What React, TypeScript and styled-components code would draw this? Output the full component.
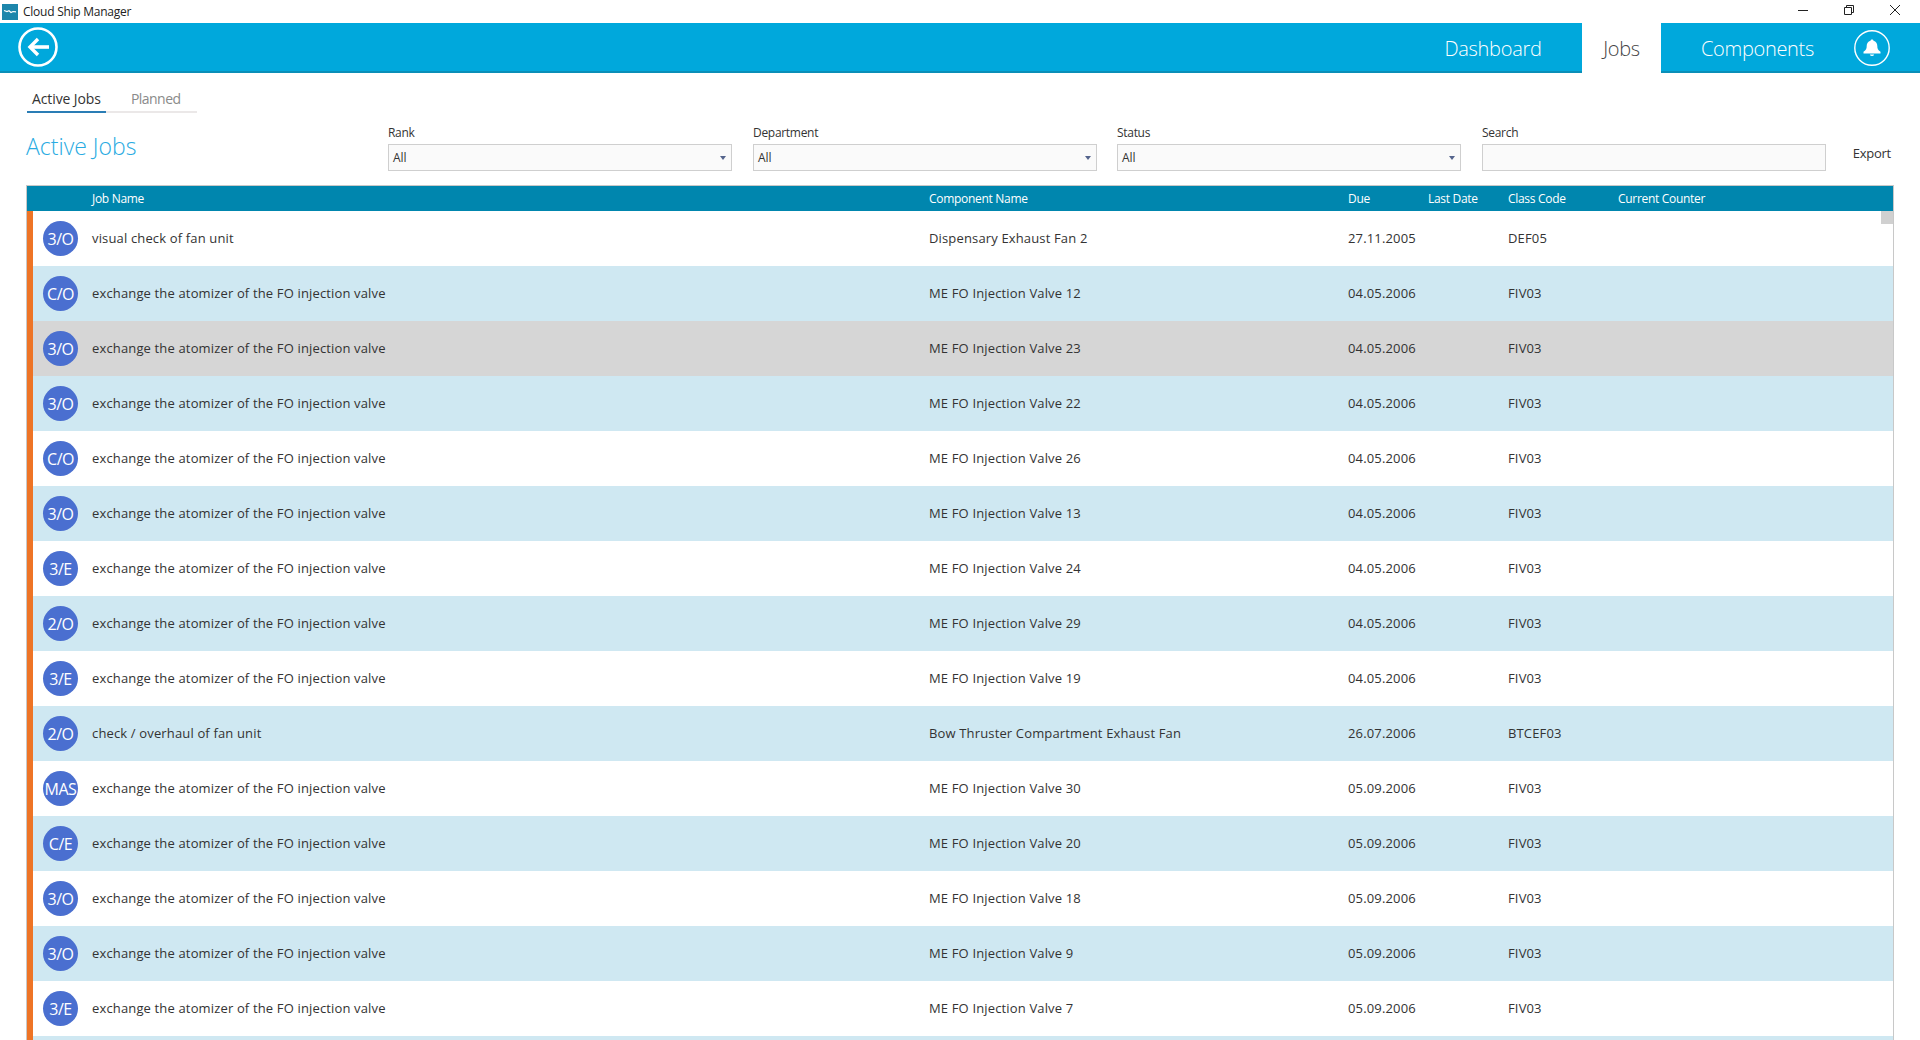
import React from "react";
import styled, { createGlobalStyle } from "styled-components";

const FONT = `"Open Sans", "Noto Sans", "Liberation Sans", sans-serif`;

const Global = createGlobalStyle`
  html, body { margin: 0; padding: 0; background: #fff; overflow: hidden; }
  body { font-family: ${FONT}; color: #333; }
  * { box-sizing: border-box; }
`;

const Page = styled.div`
  width: 1920px;
  height: 1040px;
  overflow: hidden;
  display: flex;
  flex-direction: column;
`;

const TitleBar = styled.div`
  height: 23px;
  flex: none;
  display: flex;
  align-items: center;
  padding: 0 2px;
  font-size: 12px;
  letter-spacing: -0.25px;
  color: #222;
`;

const AppName = styled.span`
  margin-left: 5px;
  flex: 1;
`;

const WinButton = styled.div`
  width: 46px;
  height: 20px;
  margin-top: -3px;
  display: flex;
  align-items: center;
  justify-content: center;
`;

const AppBar = styled.header`
  height: 50px;
  flex: none;
  display: flex;
  align-items: flex-start;
  background: #00a8dc;
  border-bottom: 2px solid #0a8fb8;
  padding-left: 18px;
`;

const BackButton = styled.div`
  width: 40px;
  height: 40px;
  margin-top: 4px;
  flex: none;
`;

const NavSpacer = styled.div`
  flex: 1;
`;

const NavItem = styled.div<{ $active?: boolean; $width: number }>`
  width: ${(p) => p.$width}px;
  height: ${(p) => (p.$active ? 50 : 48)}px;
  display: flex;
  justify-content: center;
  align-items: center;
  font-size: 20px;
  font-weight: 300;
  letter-spacing: -0.3px;
  padding-top: ${(p) => (p.$active ? 0 : 2)}px;
  color: ${(p) => (p.$active ? "#444" : "#fff")};
  background: ${(p) => (p.$active ? "#fff" : "transparent")};
  flex: none;
`;

const BellSlot = styled.div`
  width: 66px;
  flex: none;
  padding-top: 7px;
`;

const Content = styled.main`
  flex: 1;
  min-height: 0;
  display: flex;
  flex-direction: column;
  padding: 0 26px;
`;

const Tabs = styled.div`
  display: flex;
  width: 170px;
  height: 40px;
  flex: none;
  margin-left: 1px;
  border-bottom: 2px solid #ebe8e8;
`;

const Tab = styled.div<{ $active?: boolean; $width: number }>`
  width: ${(p) => p.$width}px;
  height: 40px;
  flex: none;
  padding: 16px 0 0 ${(p) => (p.$active ? 5 : 25)}px;
  font-size: 14px;
  letter-spacing: ${(p) => (p.$active ? "-0.1px" : "-0.55px")};
  line-height: 20px;
  color: ${(p) => (p.$active ? "#333" : "#8a8a8a")};
  border-bottom: 2px solid ${(p) => (p.$active ? "#2a7db5" : "transparent")};
`;

const FilterRow = styled.div`
  display: grid;
  grid-template-columns: 362px 365px 364px 365px 344px 1fr;
  height: 72px;
  flex: none;
`;

const PageTitle = styled.h1`
  margin: 17px 0 0;
  font-size: 23px;
  line-height: 32px;
  font-weight: 300;
  letter-spacing: 0;
  color: #29abe2;
`;

const Field = styled.div`
  padding-top: 11px;
  width: 344px;
`;

const FieldLabel = styled.div`
  font-size: 12px;
  line-height: 16px;
  letter-spacing: -0.3px;
  color: #333;
  margin-bottom: 4px;
  padding-top: 1px;
  height: 16px;
`;

const Select = styled.div`
  height: 27px;
  border: 1px solid #cfcfcf;
  background: #fafafa;
  display: flex;
  align-items: center;
  justify-content: space-between;
  padding: 0 5px 0 4px;
  font-size: 12px;
  color: #333;
`;

const Caret = styled.span`
  width: 0;
  height: 0;
  border-left: 3px solid transparent;
  border-right: 3px solid transparent;
  border-top: 4px solid #54648c;
`;

const Export = styled.div`
  font-size: 13px;
  letter-spacing: -0.25px;
  line-height: 18px;
  padding: 31px 3px 0 0;
  color: #333;
  text-align: right;
`;

const TableFrame = styled.section`
  flex: 1;
  min-height: 0;
  position: relative;
  border-left: 1px solid #c8c8c8;
  border-right: 1px solid #c8c8c8;
  border-top: 1px solid #c8c8c8;
  overflow: hidden;
`;

const HeaderRow = styled.div`
  display: grid;
  grid-template-columns: 65px 837px 419px 80px 80px 110px 1fr;
  height: 25px;
  align-items: center;
  background: #0086ae;
  color: #fff;
  font-size: 12px;
  letter-spacing: -0.3px;
`;

const Rows = styled.div`
  border-left: 6px solid #ee7426;
`;

const Row = styled.div<{ $tone: "white" | "blue" | "grey" }>`
  display: grid;
  grid-template-columns: 59px 837px 419px 80px 80px 110px 1fr;
  height: 55px;
  align-items: center;
  font-size: 13px;
  letter-spacing: 0.15px;
  color: #333;
  background: ${(p) =>
    p.$tone === "grey" ? "#d6d6d6" : p.$tone === "blue" ? "#cfe8f2" : "#fff"};
`;

const Avatar = styled.div`
  width: 35px;
  height: 35px;
  margin-left: 10px;
  border-radius: 50%;
  background: #4a6fd0;
  color: #fff;
  font-size: 16px;
  letter-spacing: -0.5px;
  display: flex;
  align-items: center;
  justify-content: center;
  white-space: nowrap;
`;

const ScrollThumb = styled.div`
  position: absolute;
  top: 25px;
  right: 0;
  width: 12px;
  height: 13px;
  background: #d0d0d0;
`;

const Cell = styled.div`
  white-space: nowrap;
  padding-bottom: 1px;
`;

type Job = [string, string, string, string, string];
const A = "exchange the atomizer of the FO injection valve";
const jobs: Job[] = [
  ["3/O", "visual check of fan unit", "Dispensary Exhaust Fan 2", "27.11.2005", "DEF05"],
  ["C/O", A, "ME FO Injection Valve 12", "04.05.2006", "FIV03"],
  ["3/O", A, "ME FO Injection Valve 23", "04.05.2006", "FIV03"],
  ["3/O", A, "ME FO Injection Valve 22", "04.05.2006", "FIV03"],
  ["C/O", A, "ME FO Injection Valve 26", "04.05.2006", "FIV03"],
  ["3/O", A, "ME FO Injection Valve 13", "04.05.2006", "FIV03"],
  ["3/E", A, "ME FO Injection Valve 24", "04.05.2006", "FIV03"],
  ["2/O", A, "ME FO Injection Valve 29", "04.05.2006", "FIV03"],
  ["3/E", A, "ME FO Injection Valve 19", "04.05.2006", "FIV03"],
  ["2/O", "check / overhaul of fan unit", "Bow Thruster Compartment Exhaust Fan", "26.07.2006", "BTCEF03"],
  ["MAS", A, "ME FO Injection Valve 30", "05.09.2006", "FIV03"],
  ["C/E", A, "ME FO Injection Valve 20", "05.09.2006", "FIV03"],
  ["3/O", A, "ME FO Injection Valve 18", "05.09.2006", "FIV03"],
  ["3/O", A, "ME FO Injection Valve 9", "05.09.2006", "FIV03"],
  ["3/E", A, "ME FO Injection Valve 7", "05.09.2006", "FIV03"],
];

const toneFor = (i: number): "white" | "blue" | "grey" =>
  i === 2 ? "grey" : i % 2 === 1 ? "blue" : "white";

const Logo = () => (
  <svg width="16" height="16" viewBox="0 0 16 16">
    <rect width="16" height="16" fill="#1d86ab" />
    <path
      d="M2 6.500 L5 7.500 L7 6.800 L9 8.500 L11 7.500 L14 7.800"
      stroke="#fff"
      strokeWidth="1.200"
      fill="none"
    />
  </svg>
);

const Back = () => (
  <svg width="40" height="40" viewBox="0 0 40 40" fill="none" stroke="#fff">
    <circle cx="20" cy="20" r="18.500" strokeWidth="2.600" />
    <path d="M31 20H12" strokeWidth="3.600" />
    <path d="M20 12l-8 8 8 8" strokeWidth="3.400" />
  </svg>
);

const Bell = () => (
  <svg width="36" height="36" viewBox="0 0 36 36" fill="none">
    <circle cx="18" cy="18" r="17.200" stroke="#fff" strokeWidth="1.400" />
    <path
      d="M18 9.500c-.8 0-1.400.5-1.500 1.200-2.600.6-3.800 2.800-3.800 5.300 0 2.800-.6 4-3.200 5.800v1.700h17v-1.700c-2.600-1.800-3.200-3-3.200-5.800 0-2.500-1.200-4.700-3.800-5.300-.1-.7-.7-1.200-1.500-1.200z"
      fill="#fff"
    />
    <path d="M15.800 24.500a2.300 2.200 0 0 0 4.400 0z" fill="#fff" />
  </svg>
);

const Minimize = () => (
  <svg width="10" height="10" viewBox="0 0 10 10" stroke="#222" fill="none">
    <path d="M0 5.500h10" />
  </svg>
);
const Restore = () => (
  <svg width="10" height="10" viewBox="0 0 10 10" stroke="#222" fill="none">
    <path d="M.5 2.500h7v7h-7zM2.500 2.500v-2h7v7h-2" />
  </svg>
);
const Close = () => (
  <svg width="10" height="10" viewBox="0 0 10 10" stroke="#222" fill="none">
    <path d="M0 0l10 10M10 0L0 10" />
  </svg>
);

const filters = ["Rank", "Department", "Status"];

export default function App() {
  return (
    <Page>
      <Global />
      <TitleBar>
        <Logo />
        <AppName>Cloud Ship Manager</AppName>
        <WinButton><Minimize /></WinButton>
        <WinButton><Restore /></WinButton>
        <WinButton><Close /></WinButton>
      </TitleBar>
      <AppBar>
        <BackButton><Back /></BackButton>
        <NavSpacer />
        <NavItem $width={178}>Dashboard</NavItem>
        <NavItem $width={79} $active>Jobs</NavItem>
        <NavItem $width={193}>Components</NavItem>
        <BellSlot><Bell /></BellSlot>
      </AppBar>
      <Content>
        <Tabs>
          <Tab $width={79} $active>Active Jobs</Tab>
          <Tab $width={90}>Planned</Tab>
        </Tabs>
        <FilterRow>
          <PageTitle>Active Jobs</PageTitle>
          {filters.map((f) => (
            <Field key={f}>
              <FieldLabel>{f}</FieldLabel>
              <Select>All<Caret /></Select>
            </Field>
          ))}
          <Field>
            <FieldLabel>Search</FieldLabel>
            <Select />
          </Field>
          <Export>Export</Export>
        </FilterRow>
        <TableFrame>
          <HeaderRow>
            <Cell />
            <Cell>Job Name</Cell>
            <Cell>Component Name</Cell>
            <Cell>Due</Cell>
            <Cell>Last Date</Cell>
            <Cell>Class Code</Cell>
            <Cell>Current Counter</Cell>
          </HeaderRow>
          <Rows>
            {jobs.map((j, i) => (
              <Row key={i} $tone={toneFor(i)}>
                <Avatar>{j[0]}</Avatar>
                <Cell>{j[1]}</Cell>
                <Cell>{j[2]}</Cell>
                <Cell>{j[3]}</Cell>
                <Cell />
                <Cell>{j[4]}</Cell>
                <Cell />
              </Row>
            ))}
            <Row $tone="blue" />
          </Rows>
          <ScrollThumb />
        </TableFrame>
      </Content>
    </Page>
  );
}
